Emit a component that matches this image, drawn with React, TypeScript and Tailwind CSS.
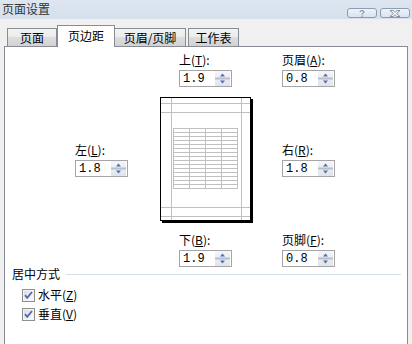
import React from "react";

const cjk = "font-['Noto_Sans_CJK_SC','Liberation_Sans',sans-serif]";

function Spinner() {
  return (
    <svg width="15" height="15" viewBox="0 0 15 15" className="block">
      <defs>
        <linearGradient id="spg" x1="0" y1="0" x2="0" y2="1">
          <stop offset="0" stopColor="#f3f5f9" />
          <stop offset="1" stopColor="#dfe4ec" />
        </linearGradient>
      </defs>
      <rect x="0" y="0" width="15" height="15" fill="url(#spg)" />
      <rect x="0" y="6.5" width="15" height="2" fill="#b9bec7" />
      <path d="M7.5 2.5 L10 5.5 L5 5.5 Z" fill="#4f6fb4" />
      <path d="M5 9.5 L10 9.5 L7.5 12.5 Z" fill="#4f6fb4" />
    </svg>
  );
}

function Field({ label, hot, value }: { label: string; hot: string; value: string }) {
  return (
    <div className="flex flex-col">
      <div className={`h-[14px] text-[12px] leading-[14px] text-black ${cjk}`}>
        {label}(<span className="underline underline-offset-1">{hot}</span>):
      </div>
      <div className="mt-[3px] flex h-[17px] w-[53px] items-center justify-between border border-[#a5a5a5] bg-white pl-[3px] pr-px">
        <span className="font-['Liberation_Mono',monospace] text-[12px] leading-none text-black">{value}</span>
        <Spinner />
      </div>
    </div>
  );
}

function PagePreview() {
  const rows = Array.from({ length: 16 }, (_, i) => 31 + i * 4);
  const cols = [13, 29, 45, 61, 77];
  return (
    <svg width="93" height="126" viewBox="0 0 93 126" className="block">
      <rect x="2" y="2" width="91" height="124" fill="#000" />
      <rect x="0.5" y="0.5" width="90" height="123" fill="#fff" stroke="#000" />
      <g stroke="#c0c0c0" strokeWidth="1">
        <line x1="11.5" y1="1" x2="11.5" y2="123" />
        <line x1="81.5" y1="1" x2="81.5" y2="123" />
        <line x1="1" y1="6.5" x2="90" y2="6.5" />
        <line x1="1" y1="15.5" x2="90" y2="15.5" />
        <line x1="1" y1="110.5" x2="90" y2="110.5" />
        <line x1="1" y1="119.5" x2="90" y2="119.5" />
        {rows.map((y) => (
          <line key={y} x1="13" y1={y + 0.5} x2="78" y2={y + 0.5} />
        ))}
        {cols.map((x) => (
          <line key={x} x1={x + 0.5} y1="31" x2={x + 0.5} y2="92" />
        ))}
      </g>
    </svg>
  );
}

function Check({ label, hot }: { label: string; hot: string }) {
  return (
    <div className="flex h-[14px] items-center">
      <svg width="13" height="13" viewBox="0 0 13 13" className="block">
        <defs>
          <linearGradient id="cbg" x1="0" y1="0" x2="1" y2="1">
            <stop offset="0" stopColor="#dcdcdc" />
            <stop offset="1" stopColor="#fbfbfb" />
          </linearGradient>
        </defs>
        <rect x="0.5" y="0.5" width="12" height="12" fill="#f4f4f4" stroke="#8e8f8f" />
        <rect x="2" y="2" width="9" height="9" fill="url(#cbg)" />
        <path d="M3 6.2 L5.2 8.8 L10 3" fill="none" stroke="#4a6cb8" strokeWidth="1.8" />
      </svg>
      <span className={`ml-[3px] text-[12px] leading-[14px] text-black ${cjk}`}>
        {label}(<span className="underline underline-offset-1">{hot}</span>)
      </span>
    </div>
  );
}

function TitleButton({ children }: { children: React.ReactNode }) {
  return (
    <div className="flex h-[10px] w-[30px] items-center justify-center rounded-[3px] border border-[#8e9cb1] bg-[linear-gradient(#eef3f9,#d9e2ee)]">
      {children}
    </div>
  );
}

export default function App() {
  return (
    <div className={`h-[344px] w-[412px] overflow-hidden bg-[#f0f0f0] ${cjk}`}>
      <div className="flex h-[19px] items-start justify-between bg-[linear-gradient(#dde6f1,#d5e0ec)] pl-[2px] pr-[2px]">
        <div className="pt-[2px] text-[12px] leading-[14px] text-[#333]">页面设置</div>
        <div className="flex gap-[3px] pt-[8px]">
          <TitleButton>
            <svg width="6" height="7" viewBox="0 0 6 7">
              <path d="M0.8 2 C0.8 0.2 5.2 0.2 5.2 2 C5.2 3.2 3 3.2 3 4.6" fill="none" stroke="#6e7787" strokeWidth="1" />
              <rect x="2.5" y="5.6" width="1" height="1.2" fill="#6e7787" />
            </svg>
          </TitleButton>
          <TitleButton>
            <svg width="12" height="7" viewBox="0 0 12 7">
              <path d="M1 0.5 L4 0.5 L6 2.3 L8 0.5 L11 0.5 L7.6 3.5 L11 6.5 L8 6.5 L6 4.7 L4 6.5 L1 6.5 L4.4 3.5 Z" fill="#fff" stroke="#6e7787" strokeWidth="0.8" />
            </svg>
          </TitleButton>
        </div>
      </div>

      <div className="mt-[6px] px-[4px]">
        <div className="flex h-[21px] items-end pl-[3px]">
          <div className="flex h-[18px] w-[50px] items-center justify-center border border-b-0 border-[#898c95] bg-[linear-gradient(#f3f3f3,#ebebeb_50%,#dddddd_50%,#d2d2d2)] text-[12px] text-black">
            页面
          </div>
          <div className="relative z-10 -mb-px flex h-[22px] w-[58px] items-start justify-center border border-b-0 border-[#898c95] bg-white pt-[3px] text-[12px] leading-[14px] text-black">
            页边距
          </div>
          <div className="flex h-[18px] w-[71px] items-center justify-center border border-b-0 border-l-0 border-[#898c95] bg-[linear-gradient(#f3f3f3,#ebebeb_50%,#dddddd_50%,#d2d2d2)] text-[12px] text-black">
            页眉/页脚
          </div>
          <div className="ml-[2px] flex h-[18px] w-[51px] items-center justify-center border border-b-0 border-[#898c95] bg-[linear-gradient(#f3f3f3,#ebebeb_50%,#dddddd_50%,#d2d2d2)] text-[12px] text-black">
            工作表
          </div>
        </div>

        <div className="h-[320px] border border-[#898c95] bg-white">
          <div className="grid grid-cols-[85px_122px_auto] pl-[70px] pt-[6px]">
            <div />
            <div className="pl-[19px]">
              <Field label="上" hot="T" value="1.9" />
            </div>
            <div>
              <Field label="页眉" hot="A" value="0.8" />
            </div>

            <div className="mt-[10px] flex items-center">
              <Field label="左" hot="L" value="1.8" />
            </div>
            <div className="mt-[10px]">
              <PagePreview />
            </div>
            <div className="mt-[10px] flex items-center">
              <Field label="右" hot="R" value="1.8" />
            </div>

            <div />
            <div className="mt-[10px] pl-[19px]">
              <Field label="下" hot="B" value="1.9" />
            </div>
            <div className="mt-[10px]">
              <Field label="页脚" hot="F" value="0.8" />
            </div>
          </div>

          <div className="pl-[7px] pr-[6px]">
            <div className="flex items-center">
              <span className="text-[12px] leading-[14px] text-black">居中方式</span>
              <div className="ml-[6px] h-px flex-1 bg-[#d5dfe5]" />
            </div>
            <div className="mt-[7px] flex flex-col gap-[5px] pl-[10px]">
              <Check label="水平" hot="Z" />
              <Check label="垂直" hot="V" />
            </div>
          </div>
        </div>
      </div>
    </div>
  );
}
